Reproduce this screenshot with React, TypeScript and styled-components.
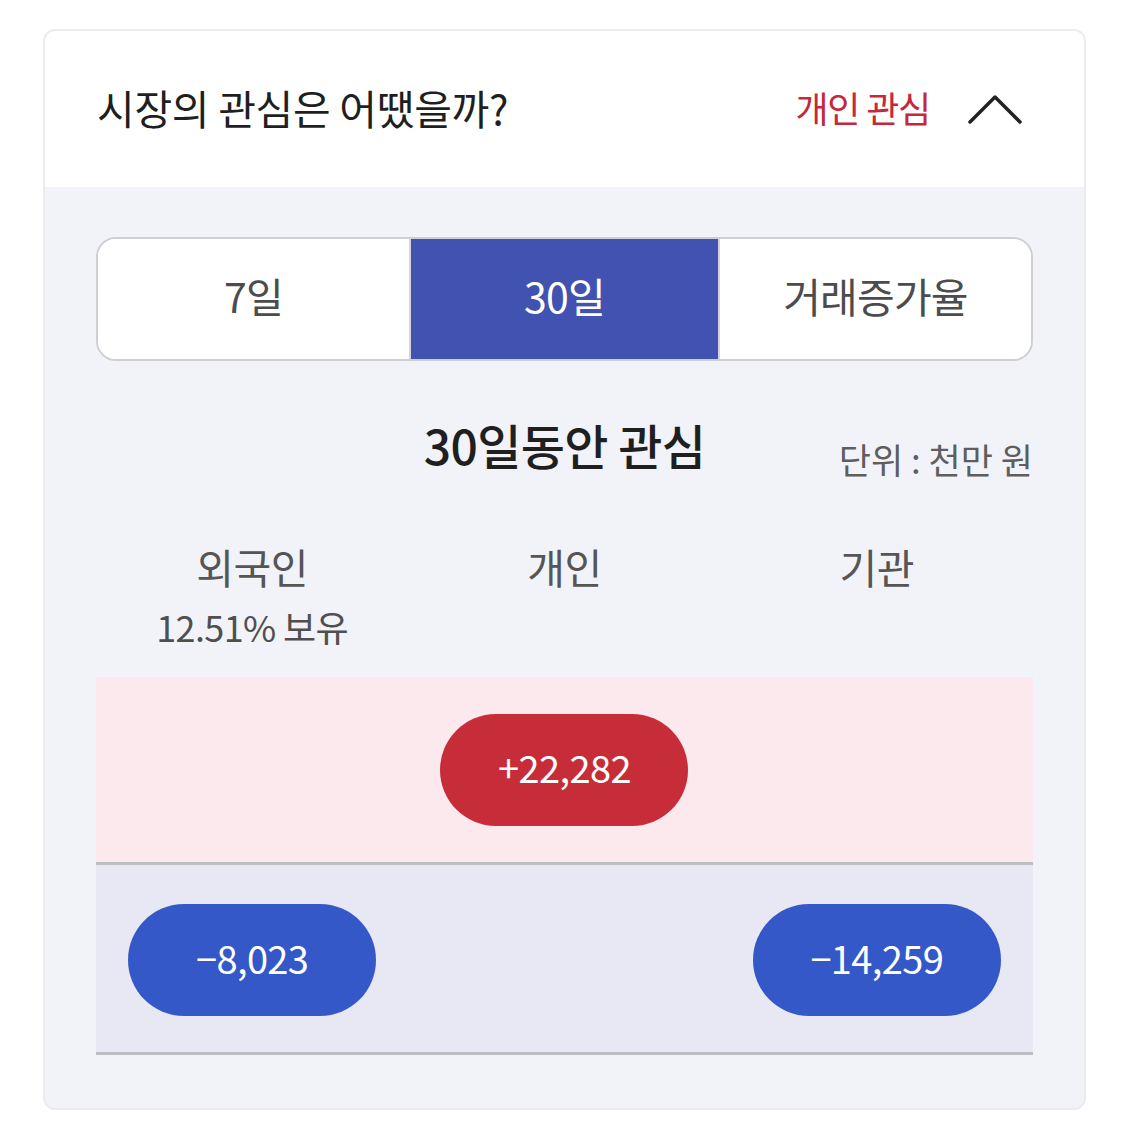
import React from "react";
import styled, { createGlobalStyle } from "styled-components";

const Global = createGlobalStyle`
  html, body { margin: 0; padding: 0; background: #ffffff; }
  body { font-family: "Noto Sans CJK KR", "Noto Sans", sans-serif; }
  * { box-sizing: border-box; }
`;

const Page = styled.div`
  padding: 29px 44px 0 43px;
  width: 1130px;
`;

const Card = styled.section`
  border: 2px solid #ececf0;
  border-radius: 12px;
  overflow: hidden;
  background: #f2f3f9;
`;

const Header = styled.header`
  height: 156px;
  background: #ffffff;
  display: flex;
  align-items: center;
  justify-content: space-between;
  padding: 0 62px 0 52px;
`;

const Title = styled.h2`
  margin: 0;
  font-size: 41px;
  font-weight: 400;
  letter-spacing: -0.3px;
  color: #1f1f1f;
  padding-bottom: 4px;
`;

const HeaderRight = styled.div`
  display: flex;
  align-items: center;
  gap: 38px;
`;

const Focus = styled.span`
  font-size: 36px;
  font-weight: 400;
  letter-spacing: -1.2px;
  color: #c4283a;
  padding-bottom: 4px;
`;

const Body = styled.div`
  padding: 50px 51px 53px 51px;
`;

const Segments = styled.div`
  display: grid;
  grid-template-columns: repeat(3, 1fr);
  height: 124px;
  border: 2px solid #cfcfd3;
  border-radius: 20px;
  overflow: hidden;
  background: #ffffff;
`;

const Segment = styled.div<{ $active?: boolean }>`
  display: flex;
  align-items: center;
  justify-content: center;
  font-size: 41px;
  letter-spacing: -0.8px;
  padding-bottom: 8px;
  color: ${(p) => (p.$active ? "#ffffff" : "#4c4c4c")};
  background: ${(p) => (p.$active ? "#4152b0" : "#ffffff")};
  border-left: ${(p) => (p.$active ? "2px solid #d4d4dc" : "none")};
  border-right: ${(p) => (p.$active ? "2px solid #d4d4dc" : "none")};
`;

const TitleRow = styled.div`
  display: grid;
  grid-template-columns: 1fr auto 1fr;
  align-items: end;
  margin-top: 48px;
  height: 76px;
`;

const PeriodTitle = styled.h3`
  grid-column: 2;
  margin: 0;
  font-size: 48px;
  font-weight: 500;
  letter-spacing: -0.6px;
  color: #1f1f1f;
  line-height: 70px;
  align-self: center;
  padding-bottom: 6px;
`;

const Unit = styled.span`
  grid-column: 3;
  justify-self: end;
  font-size: 35px;
  letter-spacing: 0;
  color: #5e5e5e;
  line-height: 44px;
  padding-bottom: 4px;
`;

const Labels = styled.div`
  display: grid;
  grid-template-columns: repeat(3, 1fr);
  margin-top: 56px;
  height: 136px;
`;

const LabelCol = styled.div`
  display: flex;
  flex-direction: column;
  align-items: center;
`;

const Label = styled.span`
  font-size: 41px;
  letter-spacing: -0.5px;
  color: #555555;
  line-height: 50px;
`;

const Sub = styled.span`
  margin-top: 14px;
  font-size: 36px;
  letter-spacing: -0.6px;
  color: #4f4f4f;
  line-height: 42px;
`;

const Band = styled.div<{ $tone: "buy" | "sell" }>`
  display: grid;
  grid-template-columns: repeat(3, 1fr);
  align-items: center;
  justify-items: center;
  height: ${(p) => (p.$tone === "buy" ? "188px" : "190px")};
  background: ${(p) => (p.$tone === "buy" ? "#fbe9ee" : "#e8e8f4")};
  border-bottom: 3px solid #bdbdc2;
  padding-top: ${(p) => (p.$tone === "buy" ? "0" : "3px")};
`;

const Pill = styled.div<{ $tone: "buy" | "sell"; $col: number }>`
  grid-column: ${(p) => p.$col};
  width: 248px;
  height: 112px;
  border-radius: 56px;
  display: flex;
  align-items: center;
  justify-content: center;
  padding-bottom: 6px;
  font-size: 38px;
  letter-spacing: -0.6px;
  color: #ffffff;
  background: ${(p) => (p.$tone === "buy" ? "#c72d38" : "#3458c8")};
`;

const Chevron = () => (
  <svg width="54" height="32" viewBox="0 0 54 32" fill="none">
    <path d="M2 29 L27 4 L52 29" stroke="#222" strokeWidth="3.5" strokeLinecap="round" strokeLinejoin="round" />
  </svg>
);

export default function App() {
  return (
    <>
      <Global />
      <Page>
        <Card>
          <Header>
            <Title>시장의 관심은 어땠을까?</Title>
            <HeaderRight>
              <Focus>개인 관심</Focus>
              <Chevron />
            </HeaderRight>
          </Header>
          <Body>
            <Segments>
              <Segment>7일</Segment>
              <Segment $active>30일</Segment>
              <Segment>거래증가율</Segment>
            </Segments>
            <TitleRow>
              <PeriodTitle>30일동안 관심</PeriodTitle>
              <Unit>단위 : 천만 원</Unit>
            </TitleRow>
            <Labels>
              <LabelCol>
                <Label>외국인</Label>
                <Sub>12.51% 보유</Sub>
              </LabelCol>
              <LabelCol>
                <Label>개인</Label>
              </LabelCol>
              <LabelCol>
                <Label>기관</Label>
              </LabelCol>
            </Labels>
            <Band $tone="buy">
              <Pill $tone="buy" $col={2}>+22,282</Pill>
            </Band>
            <Band $tone="sell">
              <Pill $tone="sell" $col={1}>−8,023</Pill>
              <Pill $tone="sell" $col={3}>−14,259</Pill>
            </Band>
          </Body>
        </Card>
      </Page>
    </>
  );
}
